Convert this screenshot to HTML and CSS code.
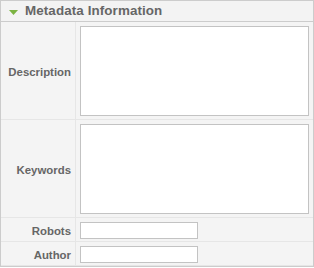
FILE: index.html
```html
<!DOCTYPE html>
<html lang="en">
<head>
    <meta charset="UTF-8">
    <title>Metadata Information</title>
    <link rel="stylesheet" href="styles.css">
</head>
<body>

    <div class="panel">
        <h3 class="panel-title">
            <svg class="toggle" width="9" height="5" viewBox="0 0 9 5"><path d="M0 0H9L4.5 5Z" fill="#7cb342"/></svg>
            Metadata Information
        </h3>

        <table class="paramlist">
            <tr>
                <td class="paramlist-key">Description</td>
                <td class="paramlist-value"><textarea class="text-area"></textarea></td>
            </tr>
            <tr>
                <td class="paramlist-key">Keywords</td>
                <td class="paramlist-value"><textarea class="text-area"></textarea></td>
            </tr>
            <tr>
                <td class="paramlist-key">Robots</td>
                <td class="paramlist-value"><input type="text" class="text-input"></td>
            </tr>
            <tr>
                <td class="paramlist-key">Author</td>
                <td class="paramlist-value"><input type="text" class="text-input"></td>
            </tr>
        </table>
    </div>

</body>
</html>
```

FILE: styles.css
```css
body {
    margin: 0;
    background: #fff;
    font-family: "Liberation Sans", Arial, sans-serif;
}

.panel {
    width: 314px;
    box-sizing: border-box;
    border: 1px solid #cccccc;
    background: #f4f4f4;
}

.panel-title {
    margin: 0;
    height: 20px;
    line-height: 20px;
    padding-left: 8px;
    border-bottom: 1px solid #cccccc;
    background: #f3f3f3;
    color: #666;
    font-size: 13.4px;
    font-weight: bold;
    letter-spacing: 0.1px;
    display: flex;
    align-items: center;
}

.toggle {
    margin-right: 7px;
    margin-top: 2px;
}

.paramlist {
    width: 100%;
    border-collapse: collapse;
}

.paramlist td {
    padding: 4px 4px 2px 4px;
    border-bottom: 1px solid #e6e6e6;
}

.paramlist-key {
    width: 66px;
    text-align: right;
    vertical-align: middle;
    color: #666;
    font-size: 11.4px;
    font-weight: bold;
    border-right: 1px solid #e6e6e6;
}

.paramlist-value {
    vertical-align: top;
}

.text-area {
    display: block;
    width: 229px;
    height: 90px;
    margin: 0 0 1px 0;
    padding: 0;
    box-sizing: border-box;
    border: 1px solid #c3c3c3;
    background: #fff;
    resize: none;
}

.text-input {
    display: block;
    width: 118px;
    height: 17px;
    margin: 0;
    padding: 0;
    box-sizing: border-box;
    border: 1px solid #c3c3c3;
    background: #fff;
}
```
